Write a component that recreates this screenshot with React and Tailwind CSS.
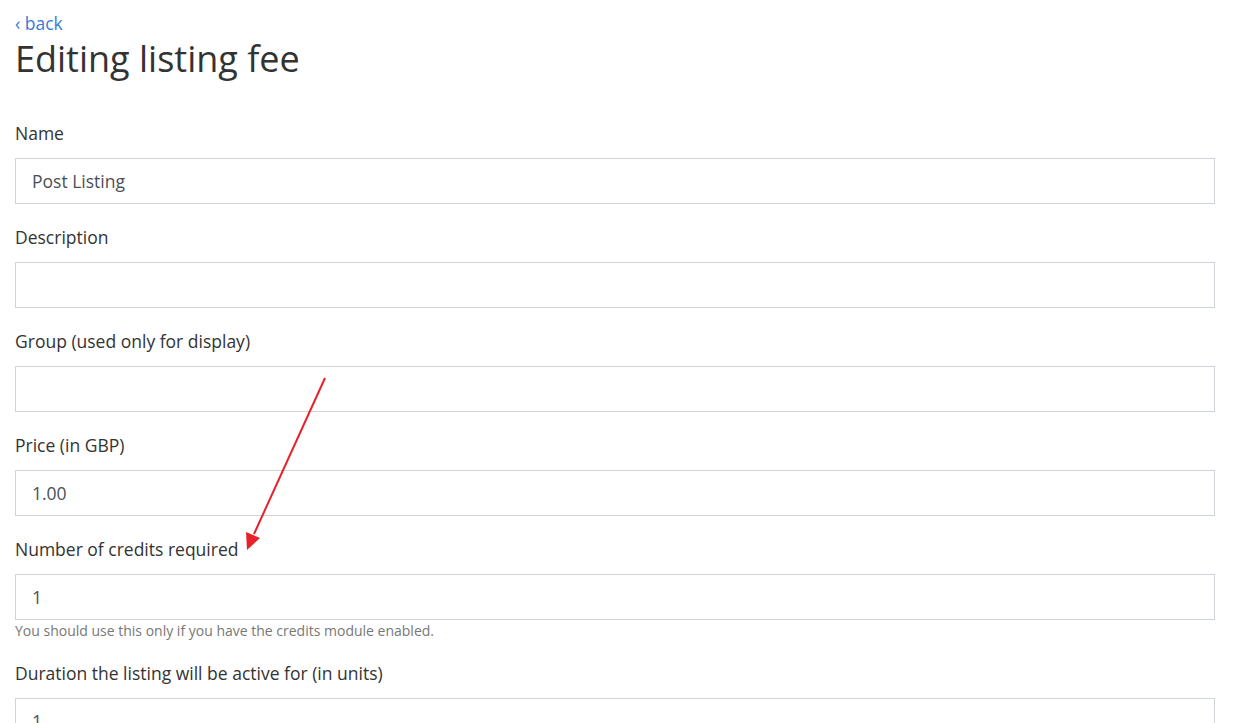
const fields = [
  { label: "Name", value: "Post Listing" },
  { label: "Description", value: "" },
  { label: "Group (used only for display)", value: "" },
  { label: "Price (in GBP)", value: "1.00" },
  {
    label: "Number of credits required",
    value: "1",
    help: "You should use this only if you have the credits module enabled.",
  },
]

const Field = ({ label, value, help }) => (
  <div className="mb-[20px]">
    <label className="block text-[17.5px] leading-[26px] text-[#333] mb-[12px]">{label}</label>
    <input
      className="block w-[1200px] h-[46px] border border-[#ced4da] bg-white px-[16px] text-[17.5px] text-[#495057] outline-none"
      defaultValue={value}
    />
    {help && <p className="mt-[1px] -mb-[1px] text-[14px] leading-[20px] text-[#777]">{help}</p>}
  </div>
)

export default function App() {
  return (
    <div
      className="relative min-h-screen bg-white pl-[15px] pt-[11px] overflow-hidden"
      style={{ fontFamily: "'Open Sans', Lato, sans-serif" }}
    >
      <a href="#" className="block text-[17.5px] leading-[24px] text-[#3a7bd5]">
        ‹ back
      </a>
      <h1 className="text-[36px] leading-[48px] text-[#333] mb-[37px]">Editing listing fee</h1>

      {fields.map((f) => (
        <Field key={f.label} {...f} />
      ))}

      <div>
        <label className="block text-[17.5px] leading-[26px] text-[#333] mb-[12px]">
          Duration the listing will be active for (in units)
        </label>
        <div className="relative w-[1200px] h-[46px] border border-[#ced4da] px-[16px] text-[17.5px] text-[#495057] leading-[44px]">
          1
          <span className="absolute right-[10px] top-[12px] text-[10px] text-[#444]">▼</span>
        </div>
      </div>

      <svg className="absolute left-0 top-0 pointer-events-none" width="1237" height="723">
        <line x1="325" y1="378" x2="254" y2="534" stroke="#e8202a" strokeWidth="2" />
        <polygon points="247,550 246,532 260,538" fill="#e8202a" />
      </svg>
    </div>
  )
}
